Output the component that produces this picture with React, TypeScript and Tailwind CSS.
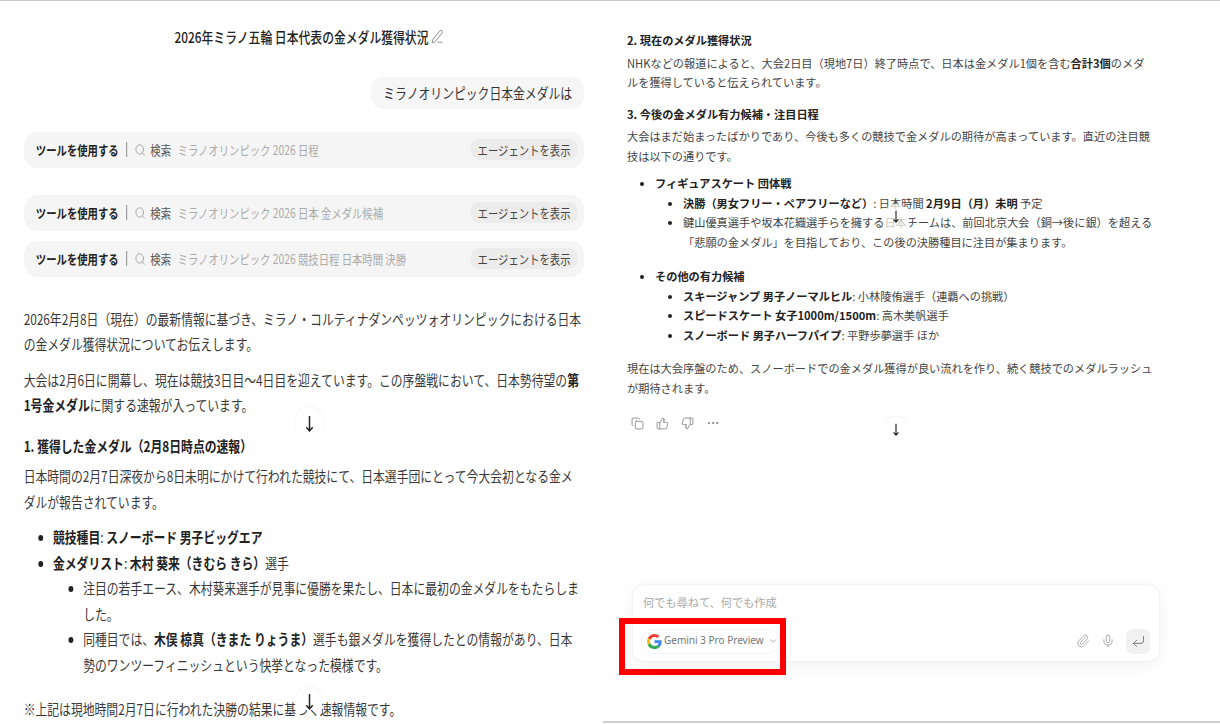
import { ChevronDown, Copy, CornerDownLeft, Ellipsis, Mic, Paperclip, PenLine, Search, ThumbsDown, ThumbsUp } from 'lucide-react';

const font = { fontFamily: '"Noto Sans CJK JP", "Noto Sans", sans-serif' };

const toolRows = [
  { query: "ミラノオリンピック 2026 日程", className: "mt-[23px]" },
  { query: "ミラノオリンピック 2026 日本 金メダル候補", className: "mt-[27px]" },
  { query: "ミラノオリンピック 2026 競技日程 日本時間 決勝", className: "mt-[10px]" },
];

const ToolRow = ({ query, className }: { query: string; className: string }) => (
  <div className={`flex h-[36px] items-center justify-between rounded-[16px] bg-[#f5f5f5] pl-[15px] pr-[8px] text-[12.7px] ${className}`}>
    <div className="flex items-center">
      <span className="font-bold text-[#222]">ツールを使用する</span>
      <span className="ml-[9px] h-[15px] w-px bg-[#777]" />
      <Search className="ml-[9px] h-[14px] w-[14px] text-[#999]" strokeWidth={1.5} />
      <span className="ml-[6px] text-[#555]">検索</span>
      <span className="ml-[8px] text-[#aaa]">{query}</span>
    </div>
    <span className="flex h-[21px] w-[132px] items-center justify-center rounded-full bg-[#ececec] text-[#444]">エージェントを表示</span>
  </div>
);

const ScrollArrow = ({ className, size }: { className: string; size: string }) => (
  <div className={`absolute flex w-[26px] justify-center rounded-t-full shadow-[0_-1px_3px_rgba(0,0,0,0.05)] ${className}`}>
    <svg viewBox="0 0 12 16" fill="none" stroke="#222" strokeWidth={1.4} className={size}>
      <path d="M6 1v14M3 11.5 6 15l3-3.5" />
    </svg>
  </div>
);

const GoogleLogo = () => (
  <svg viewBox="0 0 48 48" className="h-[15px] w-[15px] shrink-0">
    <path fill="#EA4335" d="M24 9.5c3.5 0 6.7 1.2 9.2 3.6l6.9-6.9C35.9 2.4 30.5 0 24 0 14.6 0 6.5 5.4 2.6 13.2l8 6.2C12.5 13.7 17.8 9.5 24 9.5z" />
    <path fill="#4285F4" d="M46.9 24.5c0-1.6-.1-3.1-.4-4.5H24v9h12.9c-.6 3-2.2 5.5-4.7 7.2l7.7 6c4.5-4.2 7-10.3 7-17.7z" />
    <path fill="#FBBC05" d="M10.5 28.6c-.5-1.4-.8-3-.8-4.6s.3-3.2.8-4.6l-8-6.2C.9 16.5 0 20.1 0 24s.9 7.5 2.6 10.8l7.9-6.2z" />
    <path fill="#34A853" d="M24 48c6.5 0 11.9-2.1 15.9-5.8l-7.7-6c-2.2 1.4-4.9 2.3-8.2 2.3-6.2 0-11.5-4.2-13.4-9.9l-8 6.2C6.5 42.6 14.6 48 24 48z" />
  </svg>
);

export default function App() {
  return (
    <div style={font} className="flex h-[724px] w-[1220px] overflow-hidden border-t border-[#c8c8c8] bg-white">
      {/* left panel, the capture is squeezed horizontally */}
      <section className="relative h-full w-[603px] shrink-0 overflow-hidden">
        <div className="w-[741px] origin-top-left scale-x-[0.815] pl-[29px] pr-[24px] text-[14.5px] leading-[25.5px] text-[#383838]">
          <div className="flex items-center justify-center pl-[12px] pt-[23px] font-medium text-[#222]">
            2026年ミラノ五輪 日本代表の金メダル獲得状況
            <PenLine className="ml-[3px] h-[15px] w-[15px] text-[#666]" strokeWidth={1.3} />
          </div>
          <div className="mt-[27px] flex justify-end">
            <div className="flex h-[32px] items-center rounded-[14px] bg-[#f6f6f6] px-[15px] text-[#333]">ミラノオリンピック日本金メダルは</div>
          </div>
          {toolRows.map((row) => (
            <ToolRow key={row.query} query={row.query} className={row.className} />
          ))}
          <p className="mt-[29px]">2026年2月8日（現在）の最新情報に基づき、ミラノ・コルティナダンペッツォオリンピックにおける日本の金メダル獲得状況についてお伝えします。</p>
          <p className="mt-[10px]">大会は2月6日に開幕し、現在は競技3日目〜4日目を迎えています。この序盤戦において、日本勢待望の<strong className="text-[#222]">第1号金メダル</strong>に関する速報が入っています。</p>
          <h3 className="mt-[15px] font-bold text-[#222]">1. 獲得した金メダル（2月8日時点の速報）</h3>
          <p className="mt-[5px]">日本時間の2月7日深夜から8日未明にかけて行われた競技にて、日本選手団にとって今大会初となる金メダルが報告されています。</p>
          <ul className="mt-[10px] list-disc pl-[36px] marker:text-[#222]">
            <li><strong className="text-[#222]">競技種目</strong>: <strong className="text-[#222]">スノーボード 男子ビッグエア</strong></li>
            <li>
              <strong className="text-[#222]">金メダリスト</strong>: <strong className="text-[#222]">木村 葵来（きむら きら）</strong>選手
              <ul className="list-disc pl-[37px] pr-[4px]">
                <li>注目の若手エース、木村葵来選手が見事に優勝を果たし、日本に最初の金メダルをもたらしました。</li>
                <li>同種目では、<strong className="text-[#222]">木俣 椋真（きまた りょうま）</strong>選手も銀メダルを獲得したとの情報があり、日本勢のワンツーフィニッシュという快挙となった模様です。</li>
              </ul>
            </li>
          </ul>
          <p className="mt-[19px]">※上記は現地時間2月7日に行われた決勝の結果に基づく速報情報です。</p>
        </div>
        <ScrollArrow size="h-[17px] w-[13px]" className="left-[296px] top-[406px] h-[25px] items-end bg-white" />
        <ScrollArrow size="h-[17px] w-[13px]" className="left-[296px] top-[686px] h-[23px] items-end bg-white" />
      </section>

      {/* right panel */}
      <section className="relative flex h-[722px] flex-1 flex-col border-b-2 border-[#cfcfcf] pl-[24px] text-[11.2px] leading-[19.5px] text-[#444]">
        <div className="w-[528px] pt-[30px]">
          <h3 className="font-bold text-[#222]">2. 現在のメダル獲得状況</h3>
          <p className="mt-[3px]">NHKなどの報道によると、大会2日目（現地7日）終了時点で、日本は金メダル1個を含む<strong className="text-[#222]">合計3個</strong>のメダルを獲得していると伝えられています。</p>
          <h3 className="mt-[12px] font-bold text-[#222]">3. 今後の金メダル有力候補・注目日程</h3>
          <p className="mt-[3px]">大会はまだ始まったばかりであり、今後も多くの競技で金メダルの期待が高まっています。直近の注目競技は以下の通りです。</p>
          <ul className="mt-[8px] list-disc pl-[28px] marker:text-[#222]">
            <li>
              <strong className="text-[#222]">フィギュアスケート 団体戦</strong>
              <ul className="list-disc pl-[28px]">
                <li><strong className="text-[#222]">決勝（男女フリー・ペアフリーなど）</strong>: 日本時間 <strong className="text-[#222]">2月9日（月）未明</strong> 予定</li>
                <li>鍵山優真選手や坂本花織選手らを擁する日本チームは、前回北京大会（銅→後に銀）を超える「悲願の金メダル」を目指しており、この後の決勝種目に注目が集まります。</li>
              </ul>
            </li>
            <li className="mt-[15px]">
              <strong className="text-[#222]">その他の有力候補</strong>
              <ul className="list-disc pl-[28px]">
                <li><strong className="text-[#222]">スキージャンプ 男子ノーマルヒル</strong>: 小林陵侑選手（連覇への挑戦）</li>
                <li><strong className="text-[#222]">スピードスケート 女子1000m/1500m</strong>: 高木美帆選手</li>
                <li><strong className="text-[#222]">スノーボード 男子ハーフパイプ</strong>: 平野歩夢選手 ほか</li>
              </ul>
            </li>
          </ul>
          <p className="mt-[14px]">現在は大会序盤のため、スノーボードでの金メダル獲得が良い流れを作り、続く競技でのメダルラッシュが期待されます。</p>
          <div className="mt-[18px] flex items-center gap-[12px] pl-[4px] text-[#777]">
            <Copy className="h-[13px] w-[13px]" strokeWidth={1.4} />
            <ThumbsUp className="h-[13px] w-[13px]" strokeWidth={1.4} />
            <ThumbsDown className="h-[13px] w-[13px]" strokeWidth={1.4} />
            <Ellipsis className="h-[14px] w-[14px]" strokeWidth={1.6} />
          </div>
        </div>

        <div className="relative mb-[59px] ml-[5px] mt-auto h-[78px] w-[528px] rounded-[12px] border border-[#f2f2f2] bg-white shadow-[0_4px_16px_rgba(0,0,0,0.06)]">
          <div className="pl-[10px] pt-[8px] text-[#aaa]">何でも尋ねて、何でも作成</div>
          <div className="mt-[16px] flex items-center justify-between pl-[8px] pr-[9px]">
            <div className="flex h-[25px] w-[140px] items-center whitespace-nowrap rounded-full border border-[#f5f5f5] pl-[5px] text-[10px] text-[#777]">
              <GoogleLogo />
              <span className="ml-[2px]" style={{ fontFamily: '"Noto Sans", sans-serif' }}>Gemini 3 Pro Preview</span>
              <ChevronDown className="ml-[4px] h-[10px] w-[10px] text-[#999]" />
            </div>
            <div className="flex items-center text-[#999]">
              <Paperclip className="h-[14px] w-[14px]" strokeWidth={1.4} />
              <Mic className="ml-[11px] h-[14px] w-[14px]" strokeWidth={1.4} />
              <div className="ml-[11px] flex h-[25px] w-[24px] items-center justify-center rounded-[7px] bg-[#f1f1f1]">
                <CornerDownLeft className="h-[15px] w-[15px] text-[#777]" strokeWidth={1.5} />
              </div>
            </div>
          </div>
          <div className="absolute left-[-14px] top-[33px] h-[57px] w-[167px] border-[6px] border-[#ff0000]" />
        </div>

        <ScrollArrow size="h-[13px] w-[10px]" className="left-[280px] top-[203px] h-[24px] items-center bg-white/70" />
        <ScrollArrow size="h-[13px] w-[10px]" className="left-[280px] top-[416px] h-[19px] items-end bg-white" />
      </section>
    </div>
  );
}
